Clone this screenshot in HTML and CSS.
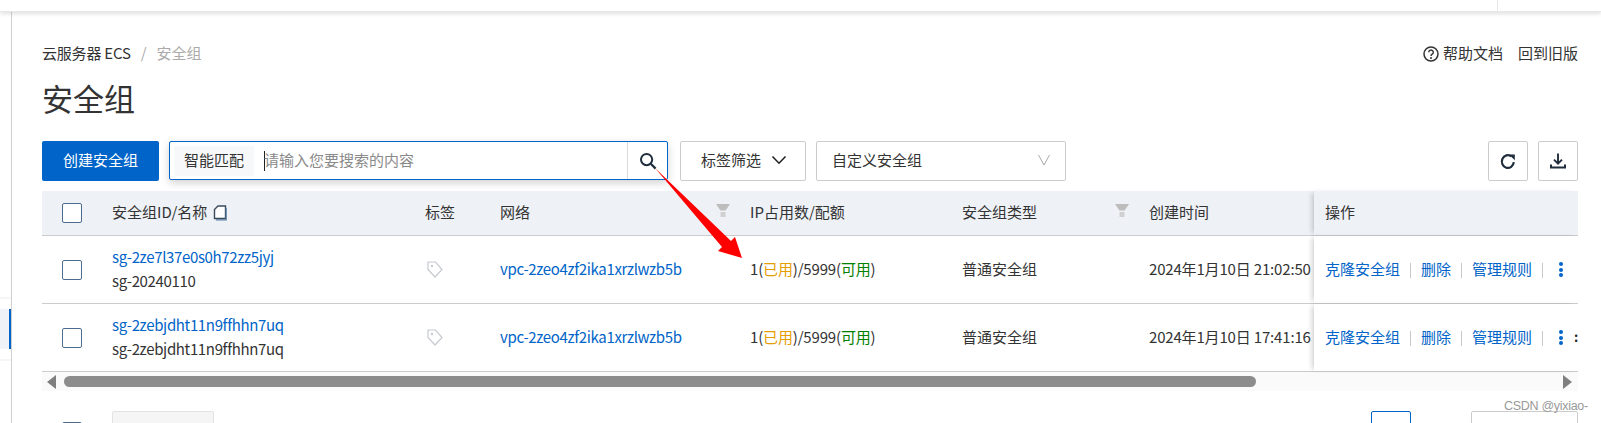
FILE: index.html
```html
<!DOCTYPE html>
<html lang="zh">
<head>
<meta charset="utf-8">
<title>安全组</title>
<link rel="stylesheet" href="styles.css">
</head>
<body>
<header class="topbar"><span class="topbar-sep"></span></header>
<div class="shell">
  <nav class="rail"><div class="rail-band"><div class="rail-active"></div></div></nav>
  <main class="main">
    <div class="crumbs">
      <div class="crumb-path"><span class="crumb-first">云服务器 ECS</span><span class="crumb-slash">/</span><span class="crumb-current">安全组</span></div>
      <div class="crumb-links">
        <span class="help"><svg class="help-icon" viewBox="0 0 16 16"><circle cx="8" cy="8" r="7" fill="none" stroke="#333" stroke-width="1.5"/><path d="M5.7 6.2a2.3 2.2 0 1 1 3.5 1.9c-.8.5-1.2.9-1.2 1.8" fill="none" stroke="#333" stroke-width="1.4"/><circle cx="8" cy="12" r="1" fill="#333"/></svg>帮助文档</span>
        <span>回到旧版</span>
      </div>
    </div>
    <h1 class="title">安全组</h1>
    <div class="toolbar">
      <button class="btn-primary">创建安全组</button>
      <div class="search">
        <span class="search-tag">智能匹配</span>
        <span class="search-input"><span class="caret"></span>请输入您要搜索的内容</span>
        <span class="search-btn"><svg class="icon-18" viewBox="0 0 18 18"><circle cx="7.6" cy="7.6" r="5.6" fill="none" stroke="#1f2d3d" stroke-width="2"/><path d="M11.8 11.8l4.8 4.8" stroke="#1f2d3d" stroke-width="2.2"/></svg></span>
      </div>
      <button class="btn-filter">标签筛选<svg class="chev" viewBox="0 0 16 10"><path d="M1.5 1.5L8 8.2l6.5-6.7" fill="none" stroke="#222" stroke-width="1.6"/></svg></button>
      <div class="select"><span>自定义安全组</span><svg class="chev-light" viewBox="0 0 14 14"><path d="M1.5 2L7 12l5.5-10" fill="none" stroke="#aaa" stroke-width="1"/></svg></div>
      <div class="tool-right">
        <button class="btn-icon"><svg class="icon-18" viewBox="0 0 18 18"><path d="M14.8 10.2A6 6.4 0 1 1 12.4 4.4" fill="none" stroke="#1f2d3d" stroke-width="2.2"/><path d="M10 2.6h5.8v5.6z" fill="#1f2d3d"/></svg></button>
        <button class="btn-icon"><svg class="icon-18" viewBox="0 0 18 18"><path d="M9 1.5v10M5 7.6L9 11.6l4-4" fill="none" stroke="#1f2d3d" stroke-width="1.9"/><path d="M2 12.5v3h14v-3" fill="none" stroke="#1f2d3d" stroke-width="2"/></svg></button>
      </div>
    </div>

    <div class="table">
      <div class="row row-head">
        <div class="cell"><span class="check"></span></div>
        <div class="cell">安全组ID/名称<svg class="book" viewBox="0 0 14 16"><path d="M5 1h7.5v12.5H1.5V4.5z" fill="#fff" stroke="#3a4a5c" stroke-width="1.4"/><path d="M13.2 3v11.8H3" fill="none" stroke="#5b7fa8" stroke-width="1.2"/></svg></div>
        <div class="cell">标签</div>
        <div class="cell cell-filter">网络<svg class="funnel" viewBox="0 0 14 14"><path d="M0 0h14L9.5 6.5h-5z" fill="#bdbdbd"/><path d="M4.5 8h5v5h-5z" fill="#d0d0d0"/></svg></div>
        <div class="cell">IP占用数/配额</div>
        <div class="cell cell-filter">安全组类型<svg class="funnel" viewBox="0 0 14 14"><path d="M0 0h14L9.5 6.5h-5z" fill="#bdbdbd"/><path d="M4.5 8h5v5h-5z" fill="#d0d0d0"/></svg></div>
        <div class="cell">创建时间</div>
        <div class="cell cell-ops">操作</div>
      </div>
      <div class="row">
        <div class="cell"><span class="check"></span></div>
        <div class="cell cell-stack latin"><a class="link">sg-2ze7l37e0s0h72zz5jyj</a><span>sg-20240110</span></div>
        <div class="cell"><svg class="tag" viewBox="0 0 16 17"><path d="M1 1h7.5l6.5 7.5-7 7.5-7-7.5z" fill="none" stroke="#c6cad0" stroke-width="1.2"/><circle cx="5" cy="5" r="1.2" fill="#c6cad0"/></svg></div>
        <div class="cell latin"><a class="link">vpc-2zeo4zf2ika1xrzlwzb5b</a></div>
        <div class="cell tight"><span>1(<span class="used">已用</span>)/5999(<span class="free">可用</span>)</span></div>
        <div class="cell">普通安全组</div>
        <div class="cell tight">2024年1月10日 21:02:50</div>
        <div class="cell cell-ops">
          <a class="link">克隆安全组</a><i class="sep"></i><a class="link">删除</a><i class="sep"></i><a class="link">管理规则</a><i class="sep"></i><span class="dots"><b></b><b></b><b></b></span>
        </div>
      </div>
      <div class="row">
        <div class="cell"><span class="check"></span></div>
        <div class="cell cell-stack latin"><a class="link">sg-2zebjdht11n9ffhhn7uq</a><span>sg-2zebjdht11n9ffhhn7uq</span></div>
        <div class="cell"><svg class="tag" viewBox="0 0 16 17"><path d="M1 1h7.5l6.5 7.5-7 7.5-7-7.5z" fill="none" stroke="#c6cad0" stroke-width="1.2"/><circle cx="5" cy="5" r="1.2" fill="#c6cad0"/></svg></div>
        <div class="cell latin"><a class="link">vpc-2zeo4zf2ika1xrzlwzb5b</a></div>
        <div class="cell tight"><span>1(<span class="used">已用</span>)/5999(<span class="free">可用</span>)</span></div>
        <div class="cell">普通安全组</div>
        <div class="cell tight">2024年1月10日 17:41:16</div>
        <div class="cell cell-ops">
          <a class="link">克隆安全组</a><i class="sep"></i><a class="link">删除</a><i class="sep"></i><a class="link">管理规则</a><i class="sep"></i><span class="dots"><b></b><b></b><b></b></span><span class="clip-dots">:</span>
        </div>
      </div>
      <div class="scrollbar">
        <span class="arrow-left"></span>
        <span class="thumb"></span>
        <span class="arrow-right"></span>
      </div>
    </div>

    <div class="pager">
      <span class="check pager-check"></span>
      <span class="pager-box"></span>
      <span class="pager-num"></span>
      <span class="pager-size"></span>
    </div>
  </main>
</div>
<svg class="annotation" viewBox="0 0 90 94"><path d="M0 2L76 75 80 71 87 92 63 85 67 81z" fill="#ff0000"/></svg>
<span class="watermark">CSDN @yixiao-</span>
</body>
</html>
```
FILE: styles.css
```css
* { box-sizing: border-box; }
html, body { margin: 0; height: 423px; overflow: hidden; background: #fff; }
body {
  position: relative;
  font-family: "Noto Sans CJK SC", "Noto Sans", sans-serif;
  font-size: 15px;
  line-height: 22px;
  color: #333;
}
button { font: inherit; cursor: pointer; padding: 0; }

.topbar {
  height: 12px;
  background: #fff;
  border-bottom: 1px solid #e8e8e8;
  box-shadow: 0 2px 4px rgba(0,0,0,.12);
  display: flex;
  justify-content: flex-end;
  padding-right: 103px;
  position: relative;
  z-index: 1;
}
.topbar-sep { width: 1px; background: #e6e6e6; }

.shell { display: flex; height: 411px; overflow: hidden; }
.rail {
  width: 12px;
  flex: none;
  border-right: 1px solid #cfcfcf;
  padding-top: 285px;
}
.rail-band {
  height: 64px;
  border-top: 2px solid #f5f5f5;
  border-bottom: 2px solid #f5f5f5;
  padding: 10px 0;
}
.rail-active {
  height: 40px;
  background: #eff2f7;
  border-right: 2px solid #0064c8;
}

.main { flex: 1; min-width: 0; padding: 0 23px 0 30px; }

.crumbs {
  display: flex;
  justify-content: space-between;
  align-items: center;
  height: 22px;
  margin-top: 30px;
}
.crumb-path { display: flex; gap: 10px; }
.crumb-first { letter-spacing: -.2px; }
.crumb-slash, .crumb-current { color: #aaa; }
.crumb-links { display: flex; gap: 15px; }
.help { display: flex; align-items: center; gap: 4px; }
.help-icon { width: 16px; height: 16px; margin-top: 2px; }

.title {
  margin: 14px 0 0;
  font-size: 31px;
  line-height: 40px;
  font-weight: 400;
  color: #333;
}

.toolbar { display: flex; margin-top: 23px; height: 40px; }
.btn-primary {
  width: 117px;
  height: 40px;
  background: #0064c8;
  border: 0;
  border-radius: 2px;
  color: #fff;
  padding-bottom: 2px;
}
.search {
  width: 499px;
  height: 39px;
  margin-left: 10px;
  display: flex;
  align-items: center;
  border: 1px solid #0064c8;
  border-radius: 2px;
  box-shadow: 0 3px 8px rgba(0,0,0,.18);
  padding-left: 4px;
  background: #fff;
}
.search-tag {
  width: 80px;
  height: 30px;
  background: #f7f8fa;
  line-height: 28px;
  text-align: center;
}
.search-input {
  flex: 1;
  display: flex;
  align-items: center;
  padding: 0 0 2px 10px;
  color: #8a8a8a;
}
.caret { width: 1px; height: 20px; background: #222; margin: 2px -1px 0 0; }
.search-btn {
  width: 40px;
  height: 37px;
  border-left: 1px solid #d9d9d9;
  display: flex;
  align-items: center;
  justify-content: center;
}
.icon-18 { width: 18px; height: 18px; display: block; }
.btn-filter {
  width: 126px;
  height: 40px;
  margin-left: 12px;
  background: #fff;
  border: 1px solid #ccc;
  border-radius: 2px;
  color: #333;
  display: flex;
  align-items: center;
  gap: 10px;
  padding: 0 0 2px 20px;
}
.chev { width: 16px; height: 10px; }
.select {
  width: 250px;
  height: 40px;
  margin-left: 10px;
  border: 1px solid #ccc;
  border-radius: 2px;
  display: flex;
  align-items: center;
  justify-content: space-between;
  padding: 0 14px 2px 15px;
}
.chev-light { width: 14px; height: 14px; }
.tool-right { margin-left: auto; display: flex; gap: 10px; }
.btn-icon {
  width: 40px;
  height: 40px;
  background: #fff;
  border: 1px solid #ccc;
  border-radius: 2px;
  display: flex;
  align-items: center;
  justify-content: center;
}

.table { margin-top: 10px; width: 1536px; }
.row {
  display: grid;
  grid-template-columns: 70px 313px 75px 250px 212px 187px 165px 264px;
  height: 68px;
  border-bottom: 1px solid #ccc;
}
.row-head { height: 45px; background: #eef1f6; }
.cell {
  display: flex;
  align-items: center;
  white-space: nowrap;
  min-width: 0;
  padding-bottom: 2px;
}
.cell:first-child { padding: 0 0 0 20px; }
.cell-filter { justify-content: space-between; padding-right: 20px; }
.cell-stack { flex-direction: column; align-items: flex-start; justify-content: center; gap: 2px; }
.latin { letter-spacing: -.35px; }
.tight { letter-spacing: -.17px; }
.cell-ops {
  padding-left: 11px;
  overflow: hidden;
  background: #fff;
  box-shadow: -4px 0 5px -2px rgba(0,0,0,.18);
  position: relative;
}
.row-head .cell-ops { background: #eef1f6; }
.check {
  width: 20px;
  height: 20px;
  background: #fff;
  border: 1px solid #4d6b8f;
  border-radius: 2px;
  display: block;
}
.book { width: 14px; height: 16px; margin: 2px 0 0 6px; }
.funnel { width: 14px; height: 14px; margin-top: -2px; }
.tag { width: 16px; height: 17px; margin: 2px 0 0 2px; }
.link { color: #0064c8; text-decoration: none; }
.used { color: #e59d00; }
.free { color: #008000; }
.sep { width: 1px; height: 15px; background: #c8c8c8; margin: 4px 10px 0; flex: none; }
.dots {
  width: 6px;
  height: 15px;
  margin: 2px 0 0 5px;
  flex: none;
  display: flex;
  flex-direction: column;
  justify-content: space-between;
  align-items: center;
}
.dots b { width: 4px; height: 4px; border-radius: 50%; background: #0064c8; display: block; }
.clip-dots { margin-left: 10px; color: #222; font-weight: 700; font-size: 13px; flex: none; }

.scrollbar {
  height: 19px;
  background: #fafafa;
  display: flex;
  align-items: center;
  padding: 0 6px 0 5px;
}
.arrow-left {
  width: 0; height: 0;
  border-style: solid;
  border-width: 7px 9px 7px 0;
  border-color: transparent #7f7f7f transparent transparent;
}
.thumb {
  width: 1192px;
  height: 11px;
  margin-left: 8px;
  background: #8c8c8c;
  border-radius: 6px;
}
.arrow-right {
  width: 0; height: 0;
  margin-left: auto;
  border-style: solid;
  border-width: 7px 0 7px 9px;
  border-color: transparent transparent transparent #7f7f7f;
}

.pager { display: flex; margin-top: 20px; width: 1536px; }
.pager-check { margin: 11px 0 0 20px; flex: none; }
.pager-box {
  width: 102px;
  height: 40px;
  margin-left: 30px;
  background: #f5f5f5;
  border: 1px solid #e3e3e3;
  border-radius: 2px;
}
.pager-num {
  width: 40px;
  height: 40px;
  margin-left: auto;
  border: 1px solid #0064c8;
  border-radius: 2px;
}
.pager-size {
  width: 107px;
  height: 40px;
  margin-left: 60px;
  border: 1px solid #ccc;
  border-radius: 2px;
}

.annotation {
  position: absolute;
  left: 655px;
  top: 166px;
  width: 90px;
  height: 94px;
}
.watermark {
  position: absolute;
  left: 1504px;
  top: 399px;
  font-family: "Liberation Sans", sans-serif;
  font-size: 12.5px;
  line-height: 15px;
  letter-spacing: -.3px;
  color: #9a9a9a;
  white-space: nowrap;
}
```
